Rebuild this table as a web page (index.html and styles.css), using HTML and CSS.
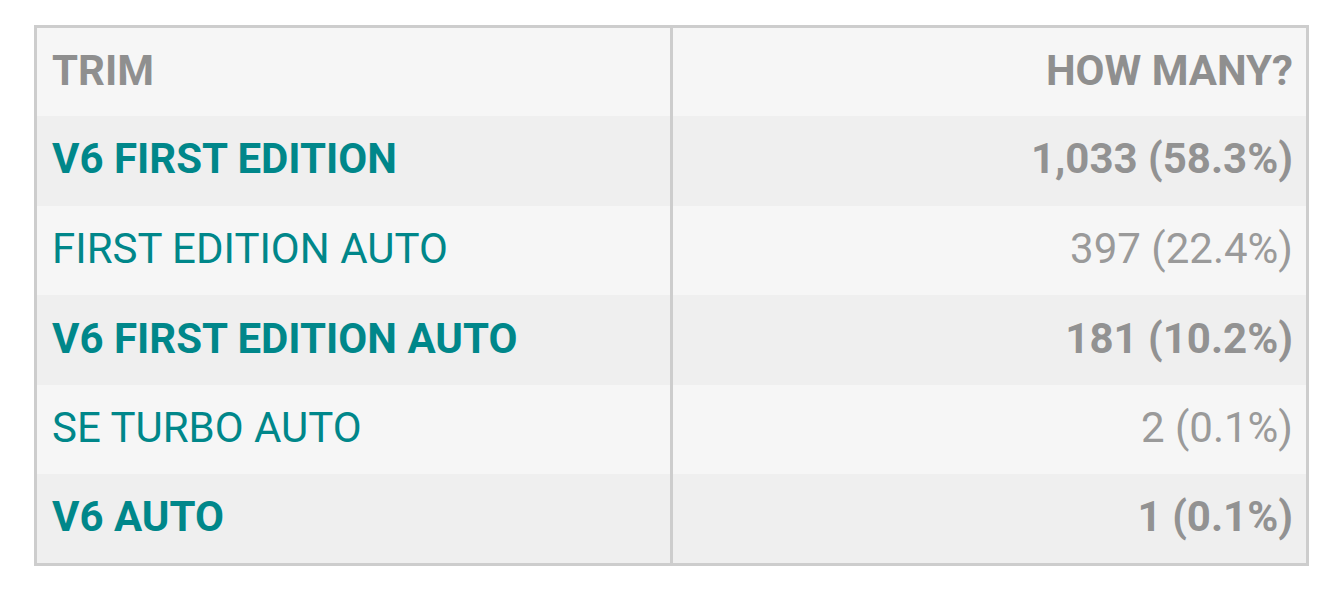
FILE: index.html
```html
<!DOCTYPE html>
<html>
<head>
<meta charset="utf-8">
<link rel="stylesheet" href="styles.css">
</head>
<body>
<table class="trims">
  <thead>
    <tr class="row-light">
      <th class="name head">TRIM</th>
      <th class="count head">HOW MANY?</th>
    </tr>
  </thead>
  <tbody>
    <tr class="row-dark bold">
      <td class="name">V6 FIRST EDITION</td>
      <td class="count">1,033 (58.3%)</td>
    </tr>
    <tr class="row-light">
      <td class="name">FIRST EDITION AUTO</td>
      <td class="count">397 (22.4%)</td>
    </tr>
    <tr class="row-dark bold">
      <td class="name">V6 FIRST EDITION AUTO</td>
      <td class="count">181 (10.2%)</td>
    </tr>
    <tr class="row-light">
      <td class="name">SE TURBO AUTO</td>
      <td class="count">2 (0.1%)</td>
    </tr>
    <tr class="row-dark bold">
      <td class="name">V6 AUTO</td>
      <td class="count">1 (0.1%)</td>
    </tr>
  </tbody>
</table>
</body>
</html>
```
FILE: styles.css
```css
html, body {
  margin: 0;
  padding: 0;
  background: #ffffff;
}
body {
  padding: 25px 0 0 34px;
  font-family: Roboto, "Liberation Sans", sans-serif;
}
.trims {
  width: 1275px;
  border-collapse: collapse;
  border: 3px solid #cdcdcd;
  table-layout: fixed;
}
.trims th,
.trims td {
  box-sizing: border-box;
  height: 89.6px;
  padding: 0 13px 3px 15px;
  font-size: 42px;
  line-height: 1;
  vertical-align: middle;
  white-space: nowrap;
}
.name {
  text-align: left;
  color: #00878a;
  font-weight: 400;
  border-right: 3px solid #cdcdcd;
}
.count {
  text-align: right;
  color: #9a9a9a;
  font-weight: 400;
}
.head {
  color: #8f8f8f !important;
  font-weight: 700 !important;
}
.bold td {
  font-weight: 700;
}
.bold .count {
  color: #929292;
}
.row-light {
  background: #f6f6f6;
}
.row-dark {
  background: #efefef;
}
```
